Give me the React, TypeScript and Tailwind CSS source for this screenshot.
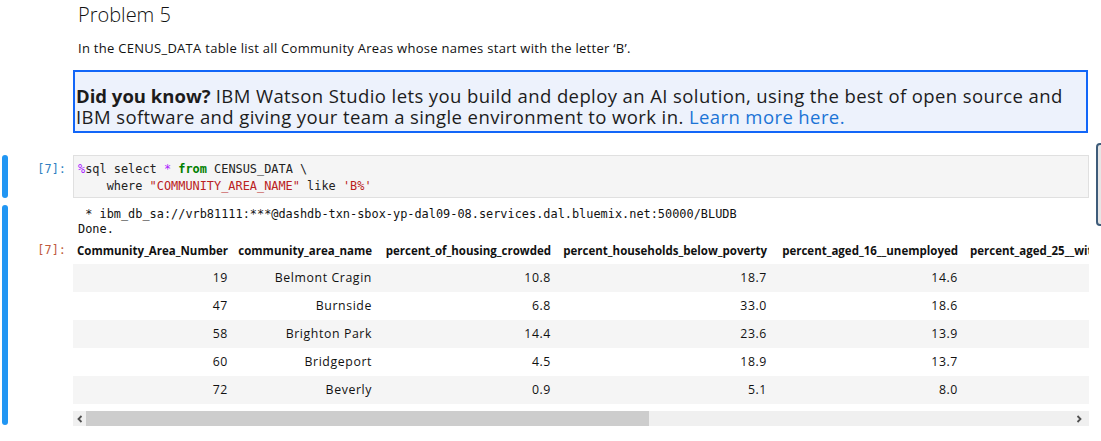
import React from "react";

const cols = [161, 144, 179, 216, 191];
const headers = [
  "Community_Area_Number",
  "community_area_name",
  "percent_of_housing_crowded",
  "percent_households_below_poverty",
  "percent_aged_16__unemployed",
  "percent_aged_25__without_high_school_diploma",
];
const rows = [
  ["19", "Belmont Cragin", "10.8", "18.7", "14.6", "37.3"],
  ["47", "Burnside", "6.8", "33.0", "18.6", "19.3"],
  ["58", "Brighton Park", "14.4", "23.6", "13.9", "45.1"],
  ["60", "Bridgeport", "4.5", "18.9", "13.7", "22.2"],
  ["72", "Beverly", "0.9", "5.1", "8.0", "3.7"],
];

const mono = "font-['DejaVu_Sans_Mono',monospace] text-[11.9px]";

function Cell({ i, header, children }: { i: number; header?: boolean; children: React.ReactNode }) {
  if (i < cols.length) {
    return (
      <div className="shrink-0 pr-[6px] text-right" style={{ width: cols[i] }}>
        {children}
      </div>
    );
  }
  return (
    <div className={`w-[330px] shrink-0 px-[6px] ${header ? "text-left" : "text-right"}`}>{children}</div>
  );
}

export default function App() {
  return (
    <div className="relative w-[1101px] h-[441px] overflow-hidden bg-white text-black font-['Open_Sans',sans-serif]">
      <div className="pl-[78px] pt-[1px]">
        <h2 className="text-[20px] leading-[28px] font-light text-[#111]">Problem 5</h2>
        <p className="mt-[9px] text-[13px] leading-[20px] tracking-[0.28px] text-[#111]">
          In the CENUS_DATA table list all Community Areas whose names start with the letter ‘B’.
        </p>
      </div>

      <div className="ml-[73px] mt-[12px] w-[1015px] h-[63px] border-2 border-[#1266f8] bg-[#edf2fc] pl-[1px] pt-[13px] text-[18.5px] leading-[21px] tracking-[0.4px] text-[#1c1c1c]">
        <span className="font-bold tracking-[0px]">Did you know?</span> IBM Watson Studio lets you build and deploy an AI solution, using the best of open source and IBM software and giving your team a single environment to work in.{" "}
        <span className="text-[#1b74d6]">Learn more here.</span>
      </div>

      {/* code cell */}
      <div className="mt-[22px] flex h-[43px]">
        <div className="ml-[2px] w-[6px] h-[43px] rounded-[3px] bg-[#2196f3]" />
        <div className={`w-[65px] pr-[7px] pt-[6px] text-right leading-[17px] text-[#307fc1] ${mono}`}>[7]:</div>
        <div className={`w-[1016px] h-[43px] border border-[#e0e0e0] bg-[#f5f5f5] pl-[4px] pt-[5px] leading-[17px] whitespace-pre text-[#222] ${mono}`}>
          <div>
            <span className="text-[#aa22ff]">%</span>sql select <span className="text-[#aa22ff]">*</span>{" "}
            <span className="text-[#008000] font-bold">from</span> CENSUS_DATA \
          </div>
          <div>
            {"    where "}
            <span className="text-[#ba2121]">"COMMUNITY_AREA_NAME"</span> like{" "}
            <span className="text-[#ba2121]">'B%'</span>
          </div>
        </div>
      </div>

      {/* output cell */}
      <div className="mt-[7px] flex">
        <div className="ml-[2px] w-[6px] h-[220px] rounded-[3px] bg-[#2196f3]" />
        <div className="flex flex-col">
          <div className="flex">
            <div className="w-[65px]" />
            <div className={`pl-[5px] pt-[2px] leading-[15px] whitespace-pre text-[#111] ${mono}`}>
              <div>{" * ibm_db_sa://vrb81111:***@dashdb-txn-sbox-yp-dal09-08.services.dal.bluemix.net:50000/BLUDB"}</div>
              <div>Done.</div>
            </div>
          </div>
          <div className="flex">
            <div className={`w-[65px] pr-[7px] pt-[5px] text-right leading-[17px] text-[#bf5b3d] ${mono}`}>[7]:</div>
            <div className="w-[1016px]">
              <div className="w-[1016px] overflow-hidden text-[#111]">
                <div className="flex h-[27px] items-center text-[11.5px] font-bold whitespace-nowrap">
                  {headers.map((h, i) => (
                    <Cell key={i} i={i} header>
                      {h}
                    </Cell>
                  ))}
                </div>
                {rows.map((r, ri) => (
                  <div
                    key={ri}
                    className={`flex h-[28px] items-center text-[12.3px] tracking-[0.6px] whitespace-nowrap ${ri % 2 === 0 ? "bg-[#f5f5f5]" : "bg-white"}`}
                  >
                    {r.map((c, i) => (
                      <Cell key={i} i={i}>
                        {c}
                      </Cell>
                    ))}
                  </div>
                ))}
              </div>
              {/* horizontal scrollbar */}
              <div className="mt-[7px] flex h-[15px] w-[1016px] bg-[#f0f0f0]">
                <div className="flex w-[13px] items-center justify-center">
                  <svg width="8" height="8" viewBox="0 0 8 8">
                    <polyline points="5.5,1 2.5,4 5.5,7" fill="none" stroke="#505050" strokeWidth="1.8" />
                  </svg>
                </div>
                <div className="w-[563px] bg-[#cdcdcd]" />
                <div className="flex-1" />
                <div className="flex w-[20px] items-center justify-center">
                  <svg width="8" height="8" viewBox="0 0 8 8">
                    <polyline points="2.5,1 5.5,4 2.5,7" fill="none" stroke="#505050" strokeWidth="1.8" />
                  </svg>
                </div>
              </div>
            </div>
          </div>
        </div>
      </div>

      <div className="absolute left-[1096px] top-[143px] w-[10px] h-[83px] rounded-[4px] border-2 border-[#3e5c7a] bg-[#e6e6e6]" />
    </div>
  );
}
